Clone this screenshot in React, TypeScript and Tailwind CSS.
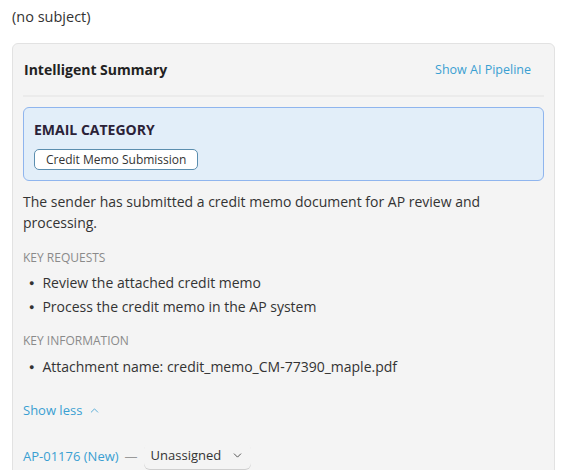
import { ChevronDown, ChevronUp } from "lucide-react";

export default function App() {
  return (
    <div className="w-[575px] h-[470px] overflow-hidden bg-white font-['Open_Sans',sans-serif] text-[#333]">
      <div className="px-3 pt-[7px] text-[14.5px] leading-5 text-[#333]">(no subject)</div>
      <section className="mx-3 mt-[16px] w-[543px] rounded-md border border-[#e2e2e2] bg-[#f4f4f4] px-[10px] pb-6">
        <div className="flex items-center justify-between border-b-2 border-[#ebebeb] pl-[1px] pr-[13px] pt-[16px] pb-[15px]">
          <h3 className="text-[14px] font-bold leading-5 text-[#222]">Intelligent Summary</h3>
          <a href="#" className="text-[12.5px] leading-5 text-[#3a9fd2]">Show AI Pipeline</a>
        </div>
        <div className="mt-[10px] rounded-md border border-[#8fb5ee] bg-[#e2eef9] px-[10px] pt-[12px] pb-[10px]">
          <div className="text-[14px] font-bold leading-5 text-[#2b2238]">EMAIL CATEGORY</div>
          <span className="mt-[9px] inline-block rounded-[5px] border border-[#5b8eaf] bg-white px-[11px] text-[12px] leading-[19px] text-[#333]">
            Credit Memo Submission
          </span>
        </div>
        <p className="mt-[10px] text-[14px] leading-[21px] text-[#333]">
          The sender has submitted a credit memo document for AP review and processing.
        </p>
        <div className="mt-[15px] text-[12px] uppercase leading-5 text-[#8a8a8a]">Key Requests</div>
        <ul className="mt-[5px] flex flex-col gap-[4px] pl-[6px] text-[14px] leading-5 text-[#333]">
          <li className="flex items-center gap-[8px]"><span className="text-[9px]">●</span>Review the attached credit memo</li>
          <li className="flex items-center gap-[8px]"><span className="text-[9px]">●</span>Process the credit memo in the AP system</li>
        </ul>
        <div className="mt-[14px] text-[12px] uppercase leading-5 text-[#8a8a8a]">Key Information</div>
        <ul className="mt-[6px] pl-[6px] text-[14px] leading-5 text-[#333]">
          <li className="flex items-center gap-[8px]"><span className="text-[9px]">●</span>Attachment name: credit_memo_CM-77390_maple.pdf</li>
        </ul>
        <button className="mt-[23px] flex items-center gap-[6px] text-[13px] leading-5 text-[#3a9fd2]">
          Show less <ChevronUp size={13} strokeWidth={1.5} />
        </button>
        <div className="mt-[23px] flex items-center text-[13px] leading-5">
          <span className="text-[#3a9fd2]">AP-01176 (New)</span>
          <span className="mx-[6px] text-[#999]">—</span>
          <button className="flex items-center gap-[10px] rounded-md px-[7px] pt-[2px] pb-[4px] text-[#333] shadow-[0_1px_0_#cfcfcf]">
            Unassigned <ChevronDown size={13} strokeWidth={1.5} />
          </button>
        </div>
      </section>
    </div>
  );
}
